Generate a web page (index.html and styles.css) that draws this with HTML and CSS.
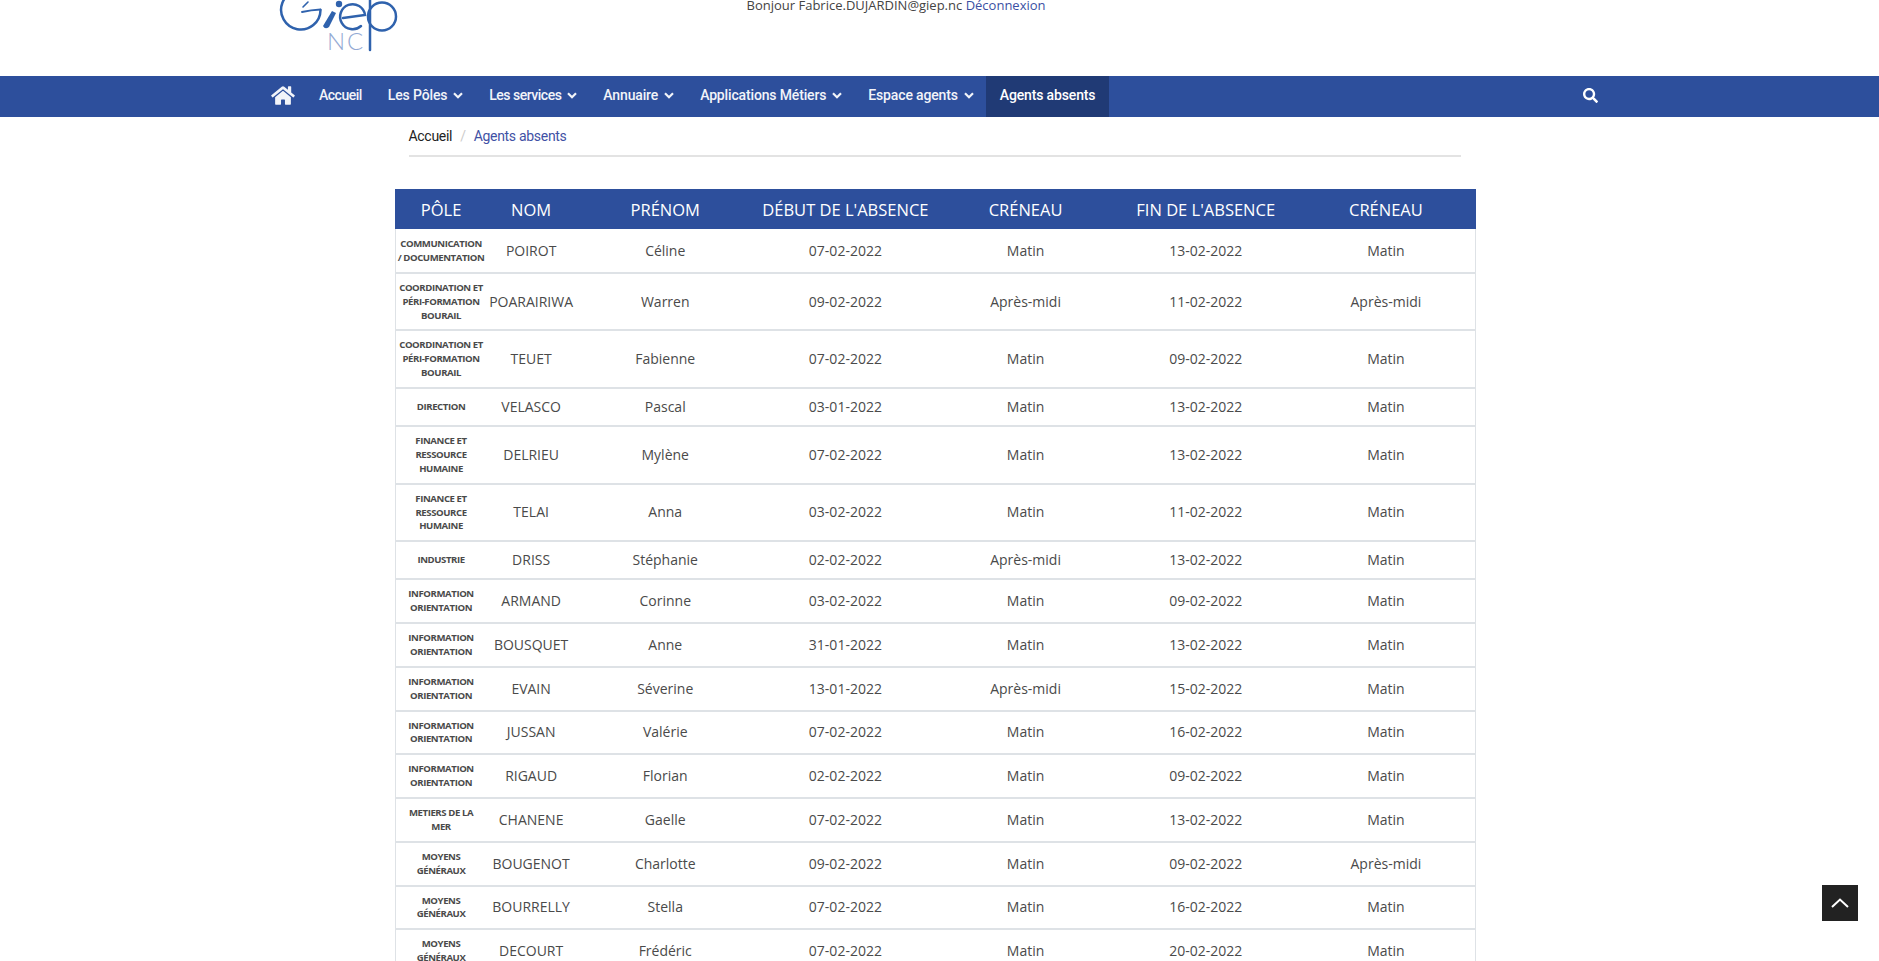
FILE: index.html
```html
<!DOCTYPE html>
<html lang="fr">
<head>
    <meta charset="UTF-8">
    <meta name="viewport" content="width=device-width, initial-scale=1.0">
    <title>Agents absents</title>
    <link rel="stylesheet" href="styles.css">
</head>
<body>
    <header class="top-header">
        <svg class="logo" width="130" height="56" viewBox="0 0 130 56" fill="none" stroke="#2f62ad" stroke-width="2.5" stroke-linecap="round">
            <path d="M36 -7 A19.7 19.7 0 1 0 45.5 10"/>
            <path d="M27 12 Q36 10 45.5 9.5" stroke-width="1.8"/>
            <path d="M33 2 L28 7" stroke-width="1.6"/>
            <path d="M57 11 L61 13 L54 27 Q50 30 48 26 Z" fill="#2f62ad" stroke="none"/>
            <circle cx="64" cy="4" r="3.2" fill="#2f62ad" stroke="none"/>
            <path d="M68 18 L90 15 A12.5 12.5 0 1 0 86 26"/>
            <circle cx="107" cy="16.5" r="14"/>
            <path d="M95 -2 V50"/>
            <text class="logo-nc" x="52" y="50" stroke="none">NC</text>
        </svg>
        <div class="user-info">Bonjour Fabrice.DUJARDIN@giep.nc <a href="#">Déconnexion</a></div>
    </header>

    <nav class="main-nav">
        <a class="nav-item nav-home" href="#">
            <svg width="24" height="21" viewBox="0 0 576 512" fill="currentColor"><path d="M280.37 148.26L96 300.11V464a16 16 0 0 0 16 16l112.06-.29a16 16 0 0 0 15.92-16V368a16 16 0 0 1 16-16h64a16 16 0 0 1 16 16v95.64a16 16 0 0 0 16 16.05L464 480a16 16 0 0 0 16-16V300L295.67 148.26a12.19 12.19 0 0 0-15.3 0zM571.6 251.47L488 182.56V44.05a12 12 0 0 0-12-12h-56a12 12 0 0 0-12 12v72.61L318.47 43a48 48 0 0 0-61 0L4.34 251.47a12 12 0 0 0-1.6 16.9l25.5 31A12 12 0 0 0 45.15 301l235.22-193.74a12.19 12.19 0 0 1 15.3 0L530.9 301a12 12 0 0 0 16.9-1.6l25.5-31a12 12 0 0 0-1.7-16.93z"/></svg>
        </a>
        <a class="nav-item tight" href="#">Accueil</a>
        <a class="nav-item" href="#">Les Pôles <svg class="chevron" width="10" height="7" viewBox="0 0 10 7"><path d="M1 1.2 L5 5.2 L9 1.2"/></svg></a>
        <a class="nav-item tight" href="#">Les services <svg class="chevron" width="10" height="7" viewBox="0 0 10 7"><path d="M1 1.2 L5 5.2 L9 1.2"/></svg></a>
        <a class="nav-item" href="#">Annuaire <svg class="chevron" width="10" height="7" viewBox="0 0 10 7"><path d="M1 1.2 L5 5.2 L9 1.2"/></svg></a>
        <a class="nav-item" href="#">Applications Métiers <svg class="chevron" width="10" height="7" viewBox="0 0 10 7"><path d="M1 1.2 L5 5.2 L9 1.2"/></svg></a>
        <a class="nav-item" href="#">Espace agents <svg class="chevron" width="10" height="7" viewBox="0 0 10 7"><path d="M1 1.2 L5 5.2 L9 1.2"/></svg></a>
        <a class="nav-item active" href="#">Agents absents</a>
        <a class="nav-search" href="#">
            <svg width="15" height="15" viewBox="0 0 512 512" fill="currentColor"><path d="M505 442.7L405.3 343c-4.5-4.5-10.6-7-17-7H372c27.6-35.3 44-79.7 44-128C416 93.1 322.9 0 208 0S0 93.1 0 208s93.1 208 208 208c48.3 0 92.7-16.4 128-44v16.3c0 6.4 2.5 12.5 7 17l99.7 99.7c9.4 9.4 24.6 9.4 33.9 0l28.3-28.3c9.4-9.4 9.4-24.6.1-34zM208 336c-70.7 0-128-57.2-128-128 0-70.7 57.2-128 128-128 70.7 0 128 57.2 128 128 0 70.7-57.2 128-128 128z"/></svg>
        </a>
    </nav>

    <main class="content">
        <div class="breadcrumb">
            <a class="crumb" href="#">Accueil</a>
            <span class="crumb-sep">/</span>
            <a class="crumb-current" href="#">Agents absents</a>
        </div>

        <table class="absences">
            <thead>
                <tr>
                    <th class="col-pole">Pôle</th>
                    <th class="col-nom">Nom</th>
                    <th>Prénom</th>
                    <th>Début de l'absence</th>
                    <th>Créneau</th>
                    <th>Fin de l'absence</th>
                    <th>Créneau</th>
                </tr>
            </thead>
            <tbody>
                <tr class="first-row"><td class="pole">Communication<br>/ Documentation</td><td>POIROT</td><td>Céline</td><td>07-02-2022</td><td>Matin</td><td>13-02-2022</td><td>Matin</td></tr>
                <tr><td class="pole">Coordination et péri-formation Bourail</td><td>POARAIRIWA</td><td>Warren</td><td>09-02-2022</td><td>Après-midi</td><td>11-02-2022</td><td>Après-midi</td></tr>
                <tr><td class="pole">Coordination et péri-formation Bourail</td><td>TEUET</td><td>Fabienne</td><td>07-02-2022</td><td>Matin</td><td>09-02-2022</td><td>Matin</td></tr>
                <tr><td class="pole">Direction</td><td>VELASCO</td><td>Pascal</td><td>03-01-2022</td><td>Matin</td><td>13-02-2022</td><td>Matin</td></tr>
                <tr><td class="pole">Finance et ressource humaine</td><td>DELRIEU</td><td>Mylène</td><td>07-02-2022</td><td>Matin</td><td>13-02-2022</td><td>Matin</td></tr>
                <tr><td class="pole">Finance et ressource humaine</td><td>TELAI</td><td>Anna</td><td>03-02-2022</td><td>Matin</td><td>11-02-2022</td><td>Matin</td></tr>
                <tr><td class="pole">Industrie</td><td>DRISS</td><td>Stéphanie</td><td>02-02-2022</td><td>Après-midi</td><td>13-02-2022</td><td>Matin</td></tr>
                <tr><td class="pole">Information orientation</td><td>ARMAND</td><td>Corinne</td><td>03-02-2022</td><td>Matin</td><td>09-02-2022</td><td>Matin</td></tr>
                <tr><td class="pole">Information orientation</td><td>BOUSQUET</td><td>Anne</td><td>31-01-2022</td><td>Matin</td><td>13-02-2022</td><td>Matin</td></tr>
                <tr><td class="pole">Information orientation</td><td>EVAIN</td><td>Séverine</td><td>13-01-2022</td><td>Après-midi</td><td>15-02-2022</td><td>Matin</td></tr>
                <tr><td class="pole">Information orientation</td><td>JUSSAN</td><td>Valérie</td><td>07-02-2022</td><td>Matin</td><td>16-02-2022</td><td>Matin</td></tr>
                <tr><td class="pole">Information orientation</td><td>RIGAUD</td><td>Florian</td><td>02-02-2022</td><td>Matin</td><td>09-02-2022</td><td>Matin</td></tr>
                <tr><td class="pole">Metiers de la<br>mer</td><td>CHANENE</td><td>Gaelle</td><td>07-02-2022</td><td>Matin</td><td>13-02-2022</td><td>Matin</td></tr>
                <tr><td class="pole">Moyens<br>généraux</td><td>BOUGENOT</td><td>Charlotte</td><td>09-02-2022</td><td>Matin</td><td>09-02-2022</td><td>Après-midi</td></tr>
                <tr><td class="pole">Moyens<br>généraux</td><td>BOURRELLY</td><td>Stella</td><td>07-02-2022</td><td>Matin</td><td>16-02-2022</td><td>Matin</td></tr>
                <tr><td class="pole">Moyens<br>généraux</td><td>DECOURT</td><td>Frédéric</td><td>07-02-2022</td><td>Matin</td><td>20-02-2022</td><td>Matin</td></tr>
            </tbody>
        </table>
    </main>

    <a class="back-to-top" href="#">
        <svg width="18" height="10" viewBox="0 0 18 10" fill="none" stroke="#fff" stroke-width="2"><path d="M1 9 L9 1.5 L17 9"/></svg>
    </a>
</body>
</html>
```

FILE: styles.css
```css
html, body {
    height: 100%;
    overflow: hidden;
}

body {
    font-family: "Open Sans", Arial, sans-serif;
    margin: 0;
    padding: 0;
    background-color: white;
    color: #4a4a4a;
}

a {
    text-decoration: none;
}

.top-header {
    height: 76px;
    overflow: hidden;
    display: flex;
    align-items: flex-start;
    padding-left: 275px;
}

.logo {
    display: block;
    flex: none;
}

.logo-nc {
    font-family: Lato, sans-serif;
    font-weight: 300;
    font-size: 24px;
    letter-spacing: 2px;
    fill: #94aad4;
}

.user-info {
    margin-left: 341.5px;
    font-size: 13px;
    line-height: 10px;
    color: #444;
}

.user-info a {
    color: #3b4fa3;
}

.main-nav {
    height: 41px;
    background-color: #2d4f9c;
    display: flex;
    align-items: stretch;
    padding-left: 257px;
    font-family: Roboto, Arial, sans-serif;
    font-size: 14px;
    font-weight: 500;
    letter-spacing: -0.15px;
}

.nav-item {
    display: flex;
    align-items: center;
    gap: 6px;
    padding: 0 12px 3px 14px;
    color: #f2f4f9;
}

.nav-item.tight {
    letter-spacing: -0.5px;
}

.nav-home {
    padding-right: 10px;
}

.nav-item.active {
    padding-right: 14px;
    background-color: #203a75;
    color: white;
}

.chevron {
    fill: none;
    stroke: currentColor;
    stroke-width: 2.2;
}

.nav-search {
    display: flex;
    align-items: center;
    margin-left: 474px;
    padding-bottom: 2px;
    color: white;
}

.content {
    width: 1081px;
    margin-left: 395px;
}

.breadcrumb {
    margin: 0 15px 32px 13.5px;
    height: 38px;
    display: flex;
    align-items: center;
    gap: 8px;
    border-bottom: 2px solid #e3e3e3;
    font-family: Roboto, Arial, sans-serif;
    font-size: 14px;
    letter-spacing: -0.3px;
}

.crumb {
    color: #222;
}

.crumb-sep {
    color: #ccc;
}

.crumb-current {
    color: #3f51a5;
}

.absences {
    width: 1081px;
    table-layout: fixed;
    border-collapse: collapse;
    font-size: 14px;
    box-shadow: inset 1px 0 #dee2e6, inset -1px 0 #dee2e6;
}

.absences th {
    width: 180px;
    height: 40px;
    padding: 0;
    background-color: #2d4f9c;
    color: white;
    font-size: 16.5px;
    font-weight: 400;
    text-transform: uppercase;
    text-align: center;
}

.absences th.col-pole {
    width: 92px;
}

.absences th.col-nom {
    width: 88px;
}

.absences td {
    padding: 7px 1px;
    line-height: 22px;
    text-align: center;
    vertical-align: middle;
    border-bottom: 2px solid #dee2e6;
}

.absences .first-row td {
    padding-top: 8px;
}

.absences td.pole {
    font-size: 9.6px;
    font-weight: 700;
    line-height: 13.88px;
    letter-spacing: -0.42px;
    text-transform: uppercase;
}

.back-to-top {
    position: fixed;
    right: 21px;
    bottom: 40px;
    width: 36px;
    height: 36px;
    background-color: #222;
    display: flex;
    align-items: center;
    justify-content: center;
}
```
